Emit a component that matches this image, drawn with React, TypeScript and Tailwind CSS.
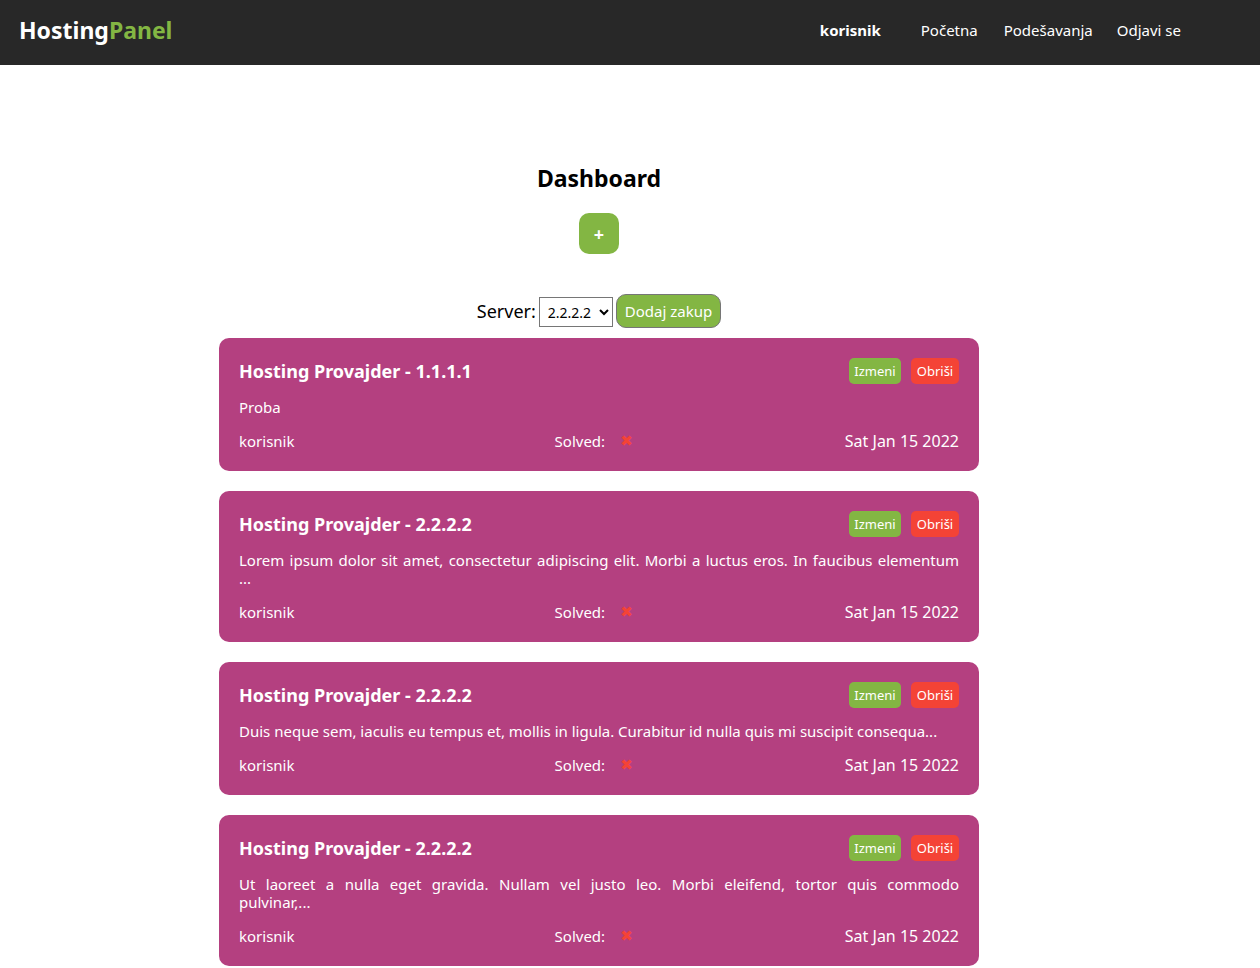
import React from "react";

type Purchase = { server: string; lines: string[]; user: string; date: string };

const purchases: Purchase[] = [
  { server: "1.1.1.1", lines: ["Proba"], user: "korisnik", date: "Sat Jan 15 2022" },
  {
    server: "2.2.2.2",
    lines: [
      "Lorem ipsum dolor sit amet, consectetur adipiscing elit. Morbi a luctus eros. In faucibus elementum",
      "...",
    ],
    user: "korisnik",
    date: "Sat Jan 15 2022",
  },
  {
    server: "2.2.2.2",
    lines: [
      "Duis neque sem, iaculis eu tempus et, mollis in ligula. Curabitur id nulla quis mi suscipit consequa...",
    ],
    user: "korisnik",
    date: "Sat Jan 15 2022",
  },
  {
    server: "2.2.2.2",
    lines: [
      "Ut laoreet a nulla eget gravida. Nullam vel justo leo. Morbi eleifend, tortor quis commodo",
      "pulvinar,...",
    ],
    user: "korisnik",
    date: "Sat Jan 15 2022",
  },
];

function Header() {
  return (
    <header className="flex h-[65px] items-center justify-between bg-[#282828] pr-[79px] pb-[5px] pl-[19px] text-white">
      <a href="#" className="text-[23px] leading-7 font-bold">
        Hosting<span className="text-[#83b643]">Panel</span>
      </a>
      <nav className="flex items-center text-[15px] leading-[18px]">
        <span className="mr-10 font-bold">korisnik</span>
        <a href="#" className="mr-[26px]">Početna</a>
        <a href="#" className="mr-6">Podešavanja</a>
        <a href="#">Odjavi se</a>
      </nav>
    </header>
  );
}

function PurchaseCard({ server, lines, user, date }: Purchase) {
  return (
    <li className="rounded-[10px] bg-[#b44080] px-5 pt-5 pb-[21px] text-[15px] leading-[18px] text-white">
      <div className="flex items-center justify-between">
        <h2 className="text-lg leading-[22px] font-bold">Hosting Provajder - {server}</h2>
        <div className="flex gap-[10px] text-[13px] leading-4">
          <button type="button" className="min-w-[52px] rounded-[5px] bg-[#83b643] py-[5px]">Izmeni</button>
          <button type="button" className="min-w-12 rounded-[5px] bg-[#f44336] py-[5px]">Obriši</button>
        </div>
      </div>
      <p className="mt-[14px]">
        {lines.map((line, i) => (
          <span
            key={i}
            className={
              i < lines.length - 1 ? "block text-justify [text-align-last:justify]" : "block text-justify"
            }
          >
            {line}
          </span>
        ))}
      </p>
      <div className="mt-4 flex justify-between">
        <span>{user}</span>
        <span className="flex items-center pl-12">
          Solved:
          <span className="ml-[15px] font-['DejaVu_Sans',sans-serif] text-[#f44336]">✖</span>
        </span>
        <span className="text-base leading-[18px]">{date}</span>
      </div>
    </li>
  );
}

export default function App() {
  return (
    <div className="min-h-screen bg-white font-['Noto_Sans',sans-serif] text-black">
      <Header />
      <main className="flex flex-col items-center pt-[99px] pr-[62px]">
        <h1 className="text-[23px] leading-7 font-bold">Dashboard</h1>
        <button type="button" aria-label="Dodaj" className="mt-[21px] h-[41px] w-10 rounded-[10px] bg-[#83b643] text-lg font-bold text-white">
          +
        </button>
        <form className="mt-10 flex items-center gap-[3px]" onSubmit={(e) => e.preventDefault()}>
          <label htmlFor="server" className="text-lg leading-5">Server:</label>
          <select id="server" defaultValue="2.2.2.2" className="mt-0.5 h-[30px] w-[74px] border border-[#767676] bg-white pr-0 pl-1 text-sm">
            <option>2.2.2.2</option>
            <option>1.1.1.1</option>
          </select>
          <button type="submit" className="h-[34px] rounded-[10px] border border-[#767676] bg-[#83b643] px-2 text-[15px] text-white">
            Dodaj zakup
          </button>
        </form>
        <ul className="mt-[10px] flex w-full max-w-[760px] flex-col gap-5">
          {purchases.map((p, i) => (
            <PurchaseCard key={i} {...p} />
          ))}
        </ul>
      </main>
    </div>
  );
}
